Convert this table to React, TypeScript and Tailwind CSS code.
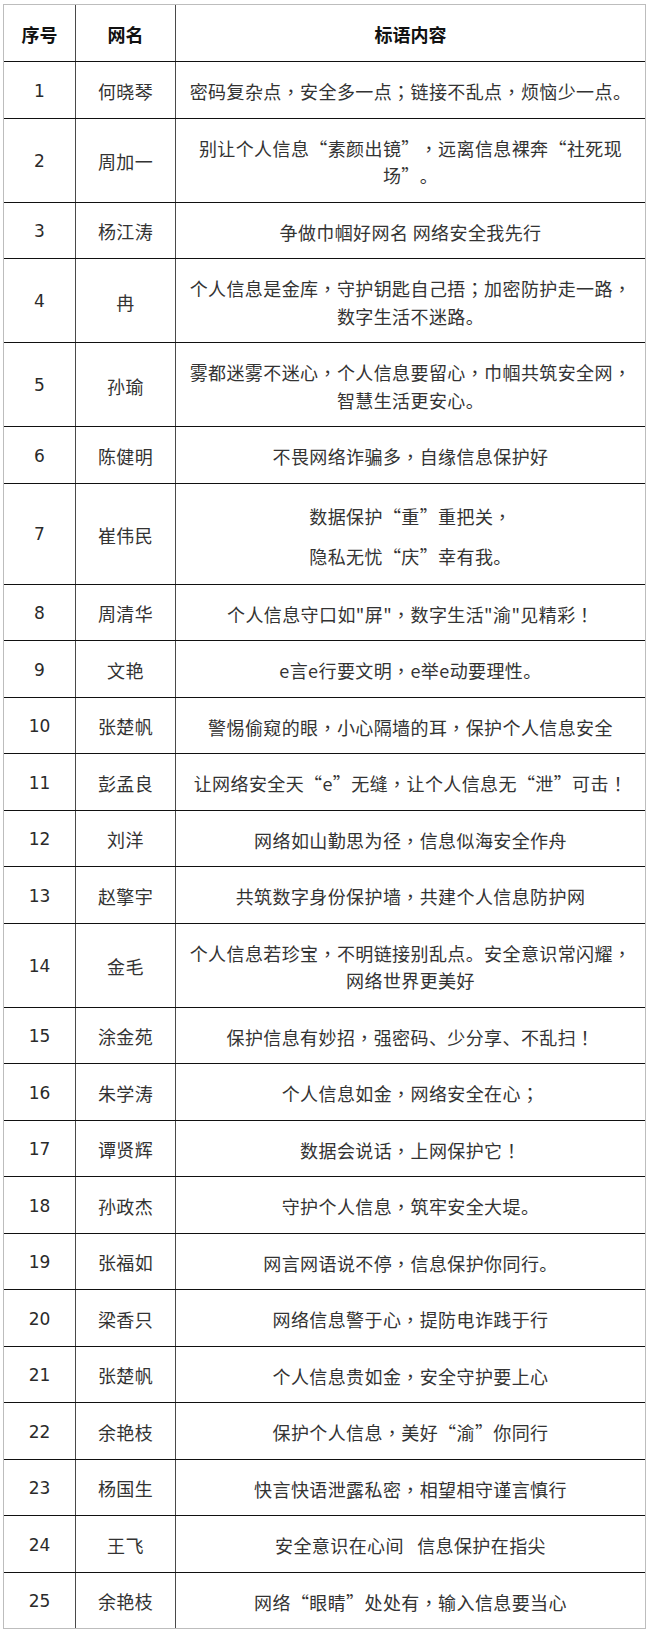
import React from "react";

type Row = [string, string, string | string[]];

const rows: Row[] = [
  ["1", "何晓琴", "密码复杂点，安全多一点；链接不乱点，烦恼少一点。"],
  ["2", "周加一", "别让个人信息“素颜出镜”，远离信息裸奔“社死现场”。"],
  ["3", "杨江涛", "争做巾帼好网名 网络安全我先行"],
  ["4", "冉", "个人信息是金库，守护钥匙自己捂；加密防护走一路，数字生活不迷路。"],
  ["5", "孙瑜", "雾都迷雾不迷心，个人信息要留心，巾帼共筑安全网，智慧生活更安心。"],
  ["6", "陈健明", "不畏网络诈骗多，自缘信息保护好"],
  ["7", "崔伟民", ["数据保护“重”重把关，", "隐私无忧“庆”幸有我。"]],
  ["8", "周清华", "个人信息守口如\"屏\"，数字生活\"渝\"见精彩！"],
  ["9", "文艳", "e言e行要文明，e举e动要理性。"],
  ["10", "张楚帆", "警惕偷窥的眼，小心隔墙的耳，保护个人信息安全"],
  ["11", "彭孟良", "让网络安全天“e”无缝，让个人信息无“泄”可击！"],
  ["12", "刘洋", "网络如山勤思为径，信息似海安全作舟"],
  ["13", "赵擎宇", "共筑数字身份保护墙，共建个人信息防护网"],
  ["14", "金毛", "个人信息若珍宝，不明链接别乱点。安全意识常闪耀，网络世界更美好"],
  ["15", "涂金苑", "保护信息有妙招，强密码、少分享、不乱扫！"],
  ["16", "朱学涛", "个人信息如金，网络安全在心；"],
  ["17", "谭贤辉", "数据会说话，上网保护它！"],
  ["18", "孙政杰", "守护个人信息，筑牢安全大堤。"],
  ["19", "张福如", "网言网语说不停，信息保护你同行。"],
  ["20", "梁香只", "网络信息警于心，提防电诈践于行"],
  ["21", "张楚帆", "个人信息贵如金，安全守护要上心"],
  ["22", "余艳枝", "保护个人信息，美好“渝”你同行"],
  ["23", "杨国生", "快言快语泄露私密，相望相守谨言慎行"],
  ["24", "王飞", "安全意识在心间\u00a0\u00a0\u00a0信息保护在指尖"],
  ["25", "余艳枝", "网络“眼睛”处处有，输入信息要当心"],
];

function Slogan({ text }: { text: string }) {
  const parts = text.split(/([，；！])/);
  return (
    <>
      {parts.map((p, i) =>
        p === "，" || p === "；" || p === "！" ? (
          <span key={i} className="font-['Noto_Sans_CJK_TC',sans-serif]">
            {p}
          </span>
        ) : (
          <React.Fragment key={i}>{p}</React.Fragment>
        )
      )}
    </>
  );
}

export default function App() {
  return (
    <div className="bg-white w-[650px] min-h-[1635px] pt-[4px] pl-[3px]">
      <div className="w-[643px] border border-[#bdbdbd] text-[#333333] font-['Noto_Sans_CJK_SC',sans-serif] [text-spacing-trim:space-all]">
        <div className="grid grid-cols-[72px_100px_1fr] h-[57px] border-b border-[#111]">
          <div className="flex items-center justify-center border-r border-[#4a4a4a] text-[18px] font-bold text-[#111] pt-[2px]">
            序号
          </div>
          <div className="flex items-center justify-center border-r border-[#4a4a4a] text-[18px] font-bold text-[#111] pt-[2px]">
            网名
          </div>
          <div className="flex items-center justify-center text-[18px] font-bold text-[#111] pt-[2px]">
            标语内容
          </div>
        </div>
        {rows.map(([num, name, text], i) => {
          const last = i === rows.length - 1;
          const multi = Array.isArray(text);
          return (
            <div
              key={num}
              className={
                "grid grid-cols-[72px_100px_1fr] " +
                (last ? "" : "border-b border-[#111]")
              }
            >
              <div className="flex items-center justify-center border-r border-[#4a4a4a] font-['DejaVu_Sans',sans-serif] text-[17px] text-[#2a2a2a] pt-[3px]">
                {num}
              </div>
              <div className="flex items-center justify-center border-r border-[#4a4a4a] text-[18px] tracking-[0.4px] pt-[3px]">
                {name}
              </div>
              {multi ? (
                <div className="flex flex-col items-center gap-[12.5px] px-[10px] pt-[19px] pb-[13.5px] text-[18px] leading-[27.5px] tracking-[0.4px] text-center">
                  {(text as string[]).map((t) => (
                    <p key={t}>
                      <Slogan text={t} />
                    </p>
                  ))}
                </div>
              ) : (
                <div className="px-[10px] pt-[16px] pb-[12px] text-[18px] leading-[27.5px] tracking-[0.4px] text-center">
                  <Slogan text={text as string} />
                </div>
              )}
            </div>
          );
        })}
      </div>
    </div>
  );
}
